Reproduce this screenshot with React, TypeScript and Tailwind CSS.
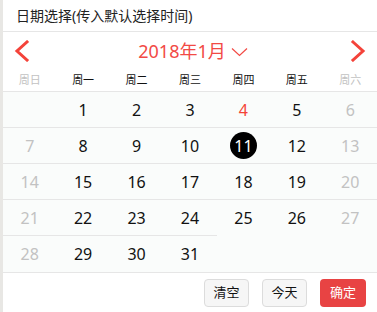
const weekdays = ["周日", "周一", "周二", "周三", "周四", "周五", "周六"];

// 2018年1月 starts on Monday
const cells: (number | null)[] = [null, ...Array.from({ length: 31 }, (_, i) => i + 1)];
const rows: (number | null)[][] = [];
for (let i = 0; i < cells.length; i += 7) rows.push(cells.slice(i, i + 7));

function Arrow({ dir }: { dir: "left" | "right" }) {
  return (
    <svg width="16" height="22" viewBox="0 0 16 22" fill="none">
      <path
        d={dir === "left" ? "M13 2 L3 11 L13 20" : "M3 2 L13 11 L3 20"}
        stroke="#f4433a"
        strokeWidth="3"
        strokeLinecap="square"
      />
    </svg>
  );
}

export default function App() {
  return (
    <div
      className="flex h-[312px] w-[377px] bg-white text-[#333]"
      style={{ fontFamily: '"Noto Sans", "Noto Sans CJK SC", sans-serif' }}
    >
      <div className="w-[3px] shrink-0 bg-[#e8e7e4]" />
      <div className="flex flex-1 flex-col">
        <div className="flex h-[32px] items-center border-b border-[#e6e6e6] pl-[13px] text-[14px] text-[#222]">
          日期选择(传入默认选择时间)
        </div>

        <div className="flex h-[38px] items-center justify-between px-[11px]">
          <Arrow dir="left" />
          <div className="flex items-center gap-[5px] pl-[6px] text-[18px] text-[#f24a45]">
            <span>2018年1月</span>
            <svg width="17" height="10" viewBox="0 0 17 10" fill="none" className="mt-[2px]">
              <path d="M1 1.5 L8.5 8.5 L16 1.5" stroke="#f24a45" strokeWidth="1.2" />
            </svg>
          </div>
          <Arrow dir="right" />
        </div>

        <div className="grid h-[22px] grid-cols-7 items-center border-b border-[#e6e6e6] text-[11px]">
          {weekdays.map((w, i) => (
            <div
              key={w}
              className={`text-center ${i === 0 || i === 6 ? "text-[#c2c2c2]" : "text-[#111]"}`}
            >
              {w}
            </div>
          ))}
        </div>

        <div className="bg-[#fafcfb]">
          {rows.map((row, ri) => (
            <div key={ri} className="grid grid-cols-7">
              {Array.from({ length: 7 }).map((_, ci) => {
                const d = row[ci] ?? null;
                const weekend = ci === 0 || ci === 6;
                const border =
                  ri < 3 ? "border-b border-[#e6e6e6]" : ri === 4 && d ? "border-t border-[#e6e6e6] -mt-px" : "";
                return (
                  <div key={ci} className={`flex h-[36px] items-center justify-center text-[16px] ${border}`}>
                    {d === 11 ? (
                      <span className="flex h-[27px] w-[27px] items-center justify-center rounded-full bg-black text-white">
                        11
                      </span>
                    ) : d ? (
                      <span
                        className={
                          d === 4 ? "text-[#f44336]" : weekend ? "text-[#c2c2c2]" : "text-[#111]"
                        }
                      >
                        {d}
                      </span>
                    ) : null}
                  </div>
                );
              })}
            </div>
          ))}
        </div>

        <div className="flex flex-1 items-center justify-end gap-[13px] border-t border-[#e6e6e6] pr-[11px] text-[13px]">
          <button className="h-[28px] w-[45px] rounded-[4px] border border-[#dcdcdc] bg-[#f6f6f6] text-[#111]">
            清空
          </button>
          <button className="h-[28px] w-[45px] rounded-[4px] border border-[#dcdcdc] bg-[#f6f6f6] text-[#111]">
            今天
          </button>
          <button className="h-[28px] w-[46px] rounded-[4px] bg-[#e84343] text-white">确定</button>
        </div>
      </div>
    </div>
  );
}
